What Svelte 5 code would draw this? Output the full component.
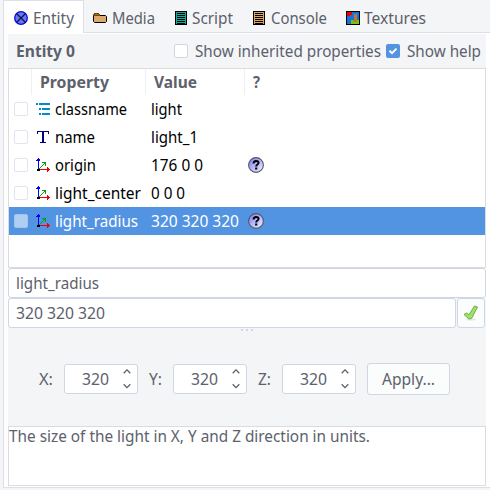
<script>
  const tabs = [
    { name: 'Entity', icon: 'entity', size: 14, w: 41, before: 10, gap: 5 },
    { name: 'Media', icon: 'folder', size: 14, w: 43, before: 19, gap: 5 },
    { name: 'Script', icon: 'script', size: 12, w: 41, before: 20, gap: 5 },
    { name: 'Console', icon: 'console', size: 12, w: 56, before: 20, gap: 6 },
    { name: 'Textures', icon: 'textures', size: 14, w: 62, before: 19, gap: 4 }
  ];
  const rows = [
    { key: 'classname', kw: 72, value: 'light', vw: 31, icon: 'list' },
    { key: 'name', kw: 40, value: 'light_1', vw: 47, icon: 'text' },
    { key: 'origin', kw: 41, value: '176 0 0', vw: 52, icon: 'axes', help: true },
    { key: 'light_center', kw: 86, value: '0 0 0', vw: 34, icon: 'axes' },
    { key: 'light_radius', kw: 83, value: '320 320 320', vw: 88, icon: 'axes', help: true, selected: true }
  ];
  const axes = [
    { name: 'X:', w: 14, before: 31, gap: 11 },
    { name: 'Y:', w: 13, before: 11, gap: 11 },
    { name: 'Z:', w: 13, before: 11, gap: 11 }
  ];
</script>

{#snippet label(text, w, bold = false)}
  <svg class="label" class:bold width={w} height="20"><text x="0" y="16" textLength={w} lengthAdjust="spacingAndGlyphs">{text}</text></svg>
{/snippet}

{#snippet icon(name)}
  {#if name === 'entity'}
    <svg width="14" height="14" viewBox="0 0 14 14"><circle cx="7" cy="7" r="6.3" fill="#6878f0" stroke="#0808d8" stroke-width="1.3"/><path d="M3 3l8 8M11 3l-8 8" stroke="#101048" stroke-width="1.2"/></svg>
  {:else if name === 'folder'}
    <svg width="14" height="14" viewBox="0 0 14 14"><path d="M.5 4.500l1-2h4l1 2h6l1 1v5l-1 1H1.500l-1-1z" fill="#dcaa6c" stroke="#000"/><path d="M1 4.500l1-2h3.500l1 2z" fill="#a86818" stroke="#7a4800"/></svg>
  {:else if name === 'script' || name === 'console'}
    <svg width="12" height="14" viewBox="0 0 12 14" shape-rendering="crispEdges"><path d="M0 0h12v14H0z"/><path d="M1 1h10v12H1z" fill={name === 'script' ? '#12aa98' : '#dfa55c'}/><path d="M2 2h8v1H2zM2 4h8v1H2zM2 6h8v1H2zM2 8h8v1H2zM2 10h8v1H2zM2 12h8v1H2z"/></svg>
  {:else if name === 'textures'}
    <svg width="14" height="14" viewBox="0 0 14 14" shape-rendering="crispEdges"><path d="M0 0h14v14H0z"/><path d="M1 1h12v12H1z" fill="#1674d8"/><path d="M1 1h5v3H4v1H1z" fill="#e80000"/><path d="M5 9h8v4H5z" fill="#78c800"/><path d="M8 3h3v8H7V9h1z" fill="#b87838"/></svg>
  {:else if name === 'list'}
    <svg width="14" height="14" viewBox="0 0 14 14" shape-rendering="crispEdges"><path d="M0 1h2v2H0zM3 1h11v2H3zM3 6h2v2H3zM6 6h8v2H6zM3 11h2v2H3zM6 11h8v2H6z" fill="#0788c8"/></svg>
  {:else if name === 'text'}
    <svg width="14" height="14" viewBox="0 0 14 14" shape-rendering="crispEdges"><path d="M1 1h12v3h-1V2H8v10h2v1H4v-1h2V2H2v2H1z" fill="#000080"/></svg>
  {:else if name === 'axes'}
    <svg width="14" height="14" viewBox="0 0 14 14" shape-rendering="crispEdges"><path d="M2 0h1v1h1v2H3v8H2V3H0V2h1V1h1z" fill="#00f"/><path d="M3 11h8V9h1v1h1v1h1v1h-1v1h-1v1h-1v-2H3z" fill="#f00000"/><path d="M3 10h1V9h1V8h1V7h1V6h1V5h1V4h1v1H9v1H8v1H7v1H6v1H5v1H4v1H3zM6 4h4v4H9V5H6z" fill="#00a010"/><path d="M1 11h3v2H1z" fill="#000"/></svg>
  {/if}
{/snippet}

<div class="window">
  <nav>
    {#each tabs as tab, i}
      <div class="tab" class:active={i === 0} style:padding-left="{tab.before}px">
        <span class="tabicon" style:margin-right="{tab.gap}px">{@render icon(tab.icon)}</span>
        {@render label(tab.name, tab.w)}
      </div>
    {/each}
  </nav>
  <main>
    <header>
      {@render label('Entity 0', 59, true)}
      <i class="check first"></i>
      {@render label('Show inherited properties', 186)}
      <i class="check on"><svg width="14" height="14" viewBox="0 0 14 14"><path d="M3.500 6.700l2.500 2.500 4.500-4.600" fill="none" stroke="#fff" stroke-width="2"/></svg></i>
      {@render label('Show help', 74)}
    </header>
    <section class="table">
      <div class="head">
        <span class="c0"></span>
        <span class="c1">{@render label('Property', 69, true)}</span>
        <span class="c2">{@render label('Value', 43, true)}</span>
        <span class="c3">{@render label('?', 7, true)}</span>
      </div>
      {#each rows as row}
        <div class="row" class:selected={row.selected}>
          <i class="check"></i>
          <span class="kind">{@render icon(row.icon)}</span>
          <span class="key">{@render label(row.key, row.kw)}</span>
          <span class="value">{@render label(row.value, row.vw)}</span>
          {#if row.help}
            <svg width="16" height="16" viewBox="0 0 16 16"><defs><linearGradient id="ball" x1="0" y1="0" x2="1" y2="1"><stop offset="0" stop-color="#7878e8"/><stop offset=".5" stop-color="#b8b8fa"/><stop offset="1" stop-color="#f4f4ff"/></linearGradient></defs><circle cx="8" cy="8" r="7.400" fill="url(#ball)" stroke="#555568" stroke-width="1.100"/><path d="M5.600 6.400c0-3.400 5-3.100 5-.6 0 1.700-2.400 1.700-2.400 3.600" fill="none" stroke="#000" stroke-width="2"/><path d="M7.100 10.500h2.200v2H7.100z"/></svg>
          {/if}
        </div>
      {/each}
    </section>
    <div class="field">{@render label('light_radius', 83)}</div>
    <div class="edit">
      <div class="field">{@render label('320 320 320', 89)}</div>
      <button class="accept" aria-label="Accept"><svg width="16" height="16" viewBox="0 0 16 16"><ellipse cx="8" cy="14.500" rx="5" ry="1" fill="#e4e6e6"/><path d="M1 9.500l2.500-1.500 2.500 1.700L11.500 1l3 1-6 11.500-2.500.5z" fill="#a2e06a" stroke="#6cae48" stroke-linejoin="round"/></svg></button>
    </div>
    <div class="grip"><i></i><i></i><i></i></div>
    <div class="vector">
      {#each axes as axis}
        <span class="axis" style:margin-left="{axis.before}px" style:margin-right="{axis.gap}px">{@render label(axis.name, axis.w)}</span>
        <div class="spin">{@render label('320', 27)}<svg width="8" height="20" viewBox="0 0 8 20"><path d="M.7 4.200L4 .9l3.300 3.300M.7 15.300L4 18.600l3.300-3.300" fill="none" stroke="#5c616c" stroke-width="1.300"/></svg></div>
      {/each}
      <button class="apply">{@render label('Apply...', 53)}</button>
    </div>
    <div class="description">{@render label('The size of the light in X, Y and Z direction in units.', 361)}</div>
  </main>
</div>

<style>
  :global(body) { background: #f4f5f7; overflow: hidden; }
  * { box-sizing: border-box; }
  svg { display: block; flex: none; }
  .window { width: 490px; height: 490px; display: flex; flex-direction: column; color: #5c616c; }
  .label { overflow: visible; font: 15.7px "Noto Sans", sans-serif; fill: currentColor; }
  .bold { font-weight: 700; }
  nav { height: 33px; display: flex; padding-left: 3px; background: linear-gradient(#dcdfe9, #dcdfe9) 3px 32px / 487px 1px no-repeat; flex: none; }
  .tab { display: flex; align-items: center; height: 33px; padding-top: 3px; }
  .tab.active { width: 81px; margin-right: -10px; background: #fff; border: solid #dcdfe9; border-width: 1px 1px 0; padding-top: 2px; }
  main { height: 455px; border-left: 1px solid #dcdfe5; border-bottom: 1px solid #dcdfe5; margin-left: 3px; padding: 1px 4px 0; background: #fff; display: flex; flex-direction: column; flex: none; }
  header { height: 34px; background: #f4f5f7; display: flex; align-items: center; padding-left: 8px; flex: none; width: 478px; }
  .check { width: 14px; height: 14px; background: #fff; border: 1px solid #cfd6e6; border-radius: 2px; flex: none; }
  .check.first { margin: 0 7px 0 99px; }
  .check.on { background: #5294e2; border: 0; margin: 0 7px 0 5px; }
  .table { height: 200px; border: 1px solid #dcdcde; flex: none; width: 478px; }
  .head { height: 26px; display: flex; align-items: center; }
  .head span { height: 26px; display: flex; align-items: center; border-right: 1px solid #eeeff2; }
  .head .c0 { width: 23px; }
  .head .c1 { width: 114px; padding-left: 8px; }
  .head .c2 { width: 99px; padding-left: 8px; }
  .head .c3 { border: 0; padding-left: 8px; }
  .row { height: 28px; display: flex; align-items: center; color: #000; padding-left: 5px; }
  .row .check { border-color: #e2e5ef; }
  .kind { margin-left: 8px; width: 19px; }
  .key { width: 96px; }
  .value { width: 97px; }
  .selected { background: #5294e2; color: #fff; }
  .row.selected .check { background: #b0cef2; border-color: #a4c4ef; }
  .field { height: 30px; border: 1px solid #cfd6e6; border-radius: 3px; background: #fff; display: flex; align-items: center; padding-left: 7px; flex: none; width: 478px; }
  .edit { display: flex; gap: 1px; height: 30px; background: #f4f5f7; width: 478px; flex: none; }
  .edit .field { width: 448px; }
  button { padding: 0; border: 1px solid #cfd6e6; border-radius: 3px; background: #fbfcfc; color: inherit; display: flex; align-items: center; justify-content: center; }
  .accept { width: 28px; height: 30px; }
  .grip { height: 5px; width: 478px; background: #f4f5f7; display: flex; justify-content: center; gap: 3px; padding-top: 1px; flex: none; }
  .grip i { width: 2px; height: 2px; background: #cfd6e6; }
  .vector { height: 93px; width: 478px; background: #f4f5f7; display: flex; align-items: center; flex: none; padding-bottom: 1px; }
  .spin { width: 74px; height: 30px; border: 1px solid #cfd6e6; border-radius: 3px; background: #fff; display: flex; align-items: center; padding-left: 17px; gap: 14px; flex: none; }
  .apply { width: 83px; height: 32px; margin-left: 11px; }
  .description { width: 478px; height: 60px; border: 1px solid #dcdcde; background: #fff; flex: none; }
  .description .label { margin-top: -1px; }
</style>
